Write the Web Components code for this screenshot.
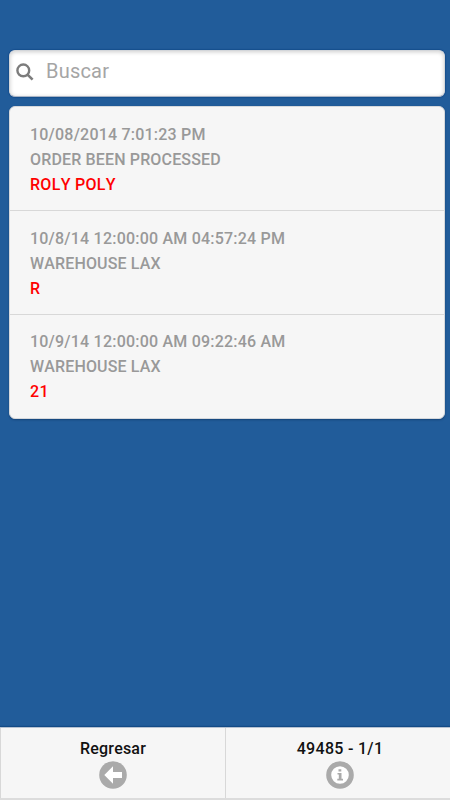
<!DOCTYPE html>
<html lang="es"><head><meta charset="utf-8"><title>Buscar</title>
<style>
html,body{margin:0;height:100%}
body{background:#215c9a;font-family:Roboto,"Liberation Sans",sans-serif;font-kerning:none}
</style></head><body>
<track-page>
  <search-box label="Buscar"></search-box>
  <event-list>
    <event-row><span slot="date">10/08/2014 7:01:23 PM</span><span slot="status">ORDER BEEN PROCESSED</span><span slot="note">ROLY POLY</span></event-row>
    <event-row><span slot="date">10/8/14 12:00:00 AM 04:57:24 PM</span><span slot="status">WAREHOUSE LAX</span><span slot="note">R</span></event-row>
    <event-row><span slot="date">10/9/14 12:00:00 AM 09:22:46 AM</span><span slot="status">WAREHOUSE LAX</span><span slot="note">21</span></event-row>
  </event-list>
  <nav-bar slot="footer">
    <nav-button icon="back">Regresar</nav-button>
    <nav-button icon="info">49485 - 1/1</nav-button>
  </nav-bar>
</track-page>
<script>
function define(name, html, setup){
  customElements.define(name, class extends HTMLElement{
    constructor(){
      super();
      this.attachShadow({mode:"open"}).innerHTML = html;
    }
    connectedCallback(){ if(setup) setup(this, this.shadowRoot); }
  });
}
define("track-page", `<style>
:host{display:flex;flex-direction:column;height:100vh;box-sizing:border-box}
main{flex:1;padding:50px 5px 0 8.5px;display:flex;flex-direction:column;gap:9px}
</style><main><slot></slot></main><slot name="footer"></slot>`);
define("search-box", `<style>
:host{display:flex;align-items:center;box-sizing:border-box;height:47px;border:1px solid #d3d6da;border-bottom-color:#a9b4c6;border-radius:6px;background:#fff;
box-shadow:inset 0 1px 4px rgba(0,0,0,.2),0 0 1px 1px rgba(0,55,120,.35);padding-left:6px}
svg{width:20px;height:20px;flex:none;margin-top:-3px}
span{margin-left:10.5px;font-size:20px;line-height:24px;color:#a5a5a5;letter-spacing:.2px;margin-top:-6px}
</style><svg viewBox="0 0 20 20" fill="none" stroke="#7c7c7c"><circle cx="7.3" cy="8.4" r="5.9" stroke-width="2.4"/><path d="M11.5 12.6L16.6 17.7" stroke-width="2.6"/></svg><span></span>`,
(el,root)=>{root.querySelector("span").textContent=el.getAttribute("label")});
define("event-list", `<style>
:host{display:block;box-sizing:border-box;height:313px;background:#f6f6f6;border:1px solid #d5d8dc;border-radius:6px;box-shadow:0 1px 2px rgba(0,30,70,.4);overflow:hidden}
::slotted(event-row:not(:last-child)){border-bottom:1px solid #d8d8d8}
::slotted(event-row:last-child){padding-top:14px}
</style><slot></slot>`);
define("event-row", `<style>
:host{display:flex;flex-direction:column;box-sizing:border-box;height:104px;padding:15px 20.5px 0;font-size:16px;line-height:25px;font-weight:500;color:#999;letter-spacing:.15px;white-space:nowrap}
.date{letter-spacing:.21px}
.note{color:#f00;letter-spacing:.3px}
</style><div class="date"><slot name="date"></slot></div><div><slot name="status"></slot></div><div class="note"><slot name="note"></slot></div>`);
define("nav-bar", `<style>
:host{display:grid;grid-template-columns:226px 1fr;box-sizing:border-box;height:73px;background:#f6f6f6;border-top:1px solid #b6c2d2;border-bottom:2px solid #dcdcdc;box-shadow:0 -1px 1px rgba(0,50,105,.4)}
::slotted(nav-button:first-child){border-left:1px solid #d8d8d8;border-right:1px solid #d8d8d8}
::slotted(nav-button:last-child){padding-left:4px}
</style><slot></slot>`);
define("nav-button", `<style>
:host{display:flex;flex-direction:column;align-items:center;box-sizing:border-box;padding-top:11px;font-size:16px;line-height:20px;font-weight:500;color:#111;letter-spacing:.3px}
:host([icon=back]){letter-spacing:.2px}
svg{width:28px;height:28px;margin-top:2px;margin-right:1px}
</style><slot></slot><svg viewBox="0 0 28 28"></svg>`,
(el,root)=>{
  root.querySelector("svg").innerHTML = el.getAttribute("icon")==="back"
  ? '<circle cx="14" cy="14" r="13.8" fill="#aaa"/><path d="M5.3 14L14 5.3V11H23V17H14V22.7Z" fill="#fff"/>'
  : '<circle cx="14" cy="14" r="11.3" fill="#fff" stroke="#aaa" stroke-width="5"/><path d="M12.5 8.2H15.3V10.6H12.5ZM11.5 12H15.5V17.7H17V19.4H11.3V17.7H12.8V13.6H11.5Z" fill="#aaa"/>';
});
</script></body></html>
